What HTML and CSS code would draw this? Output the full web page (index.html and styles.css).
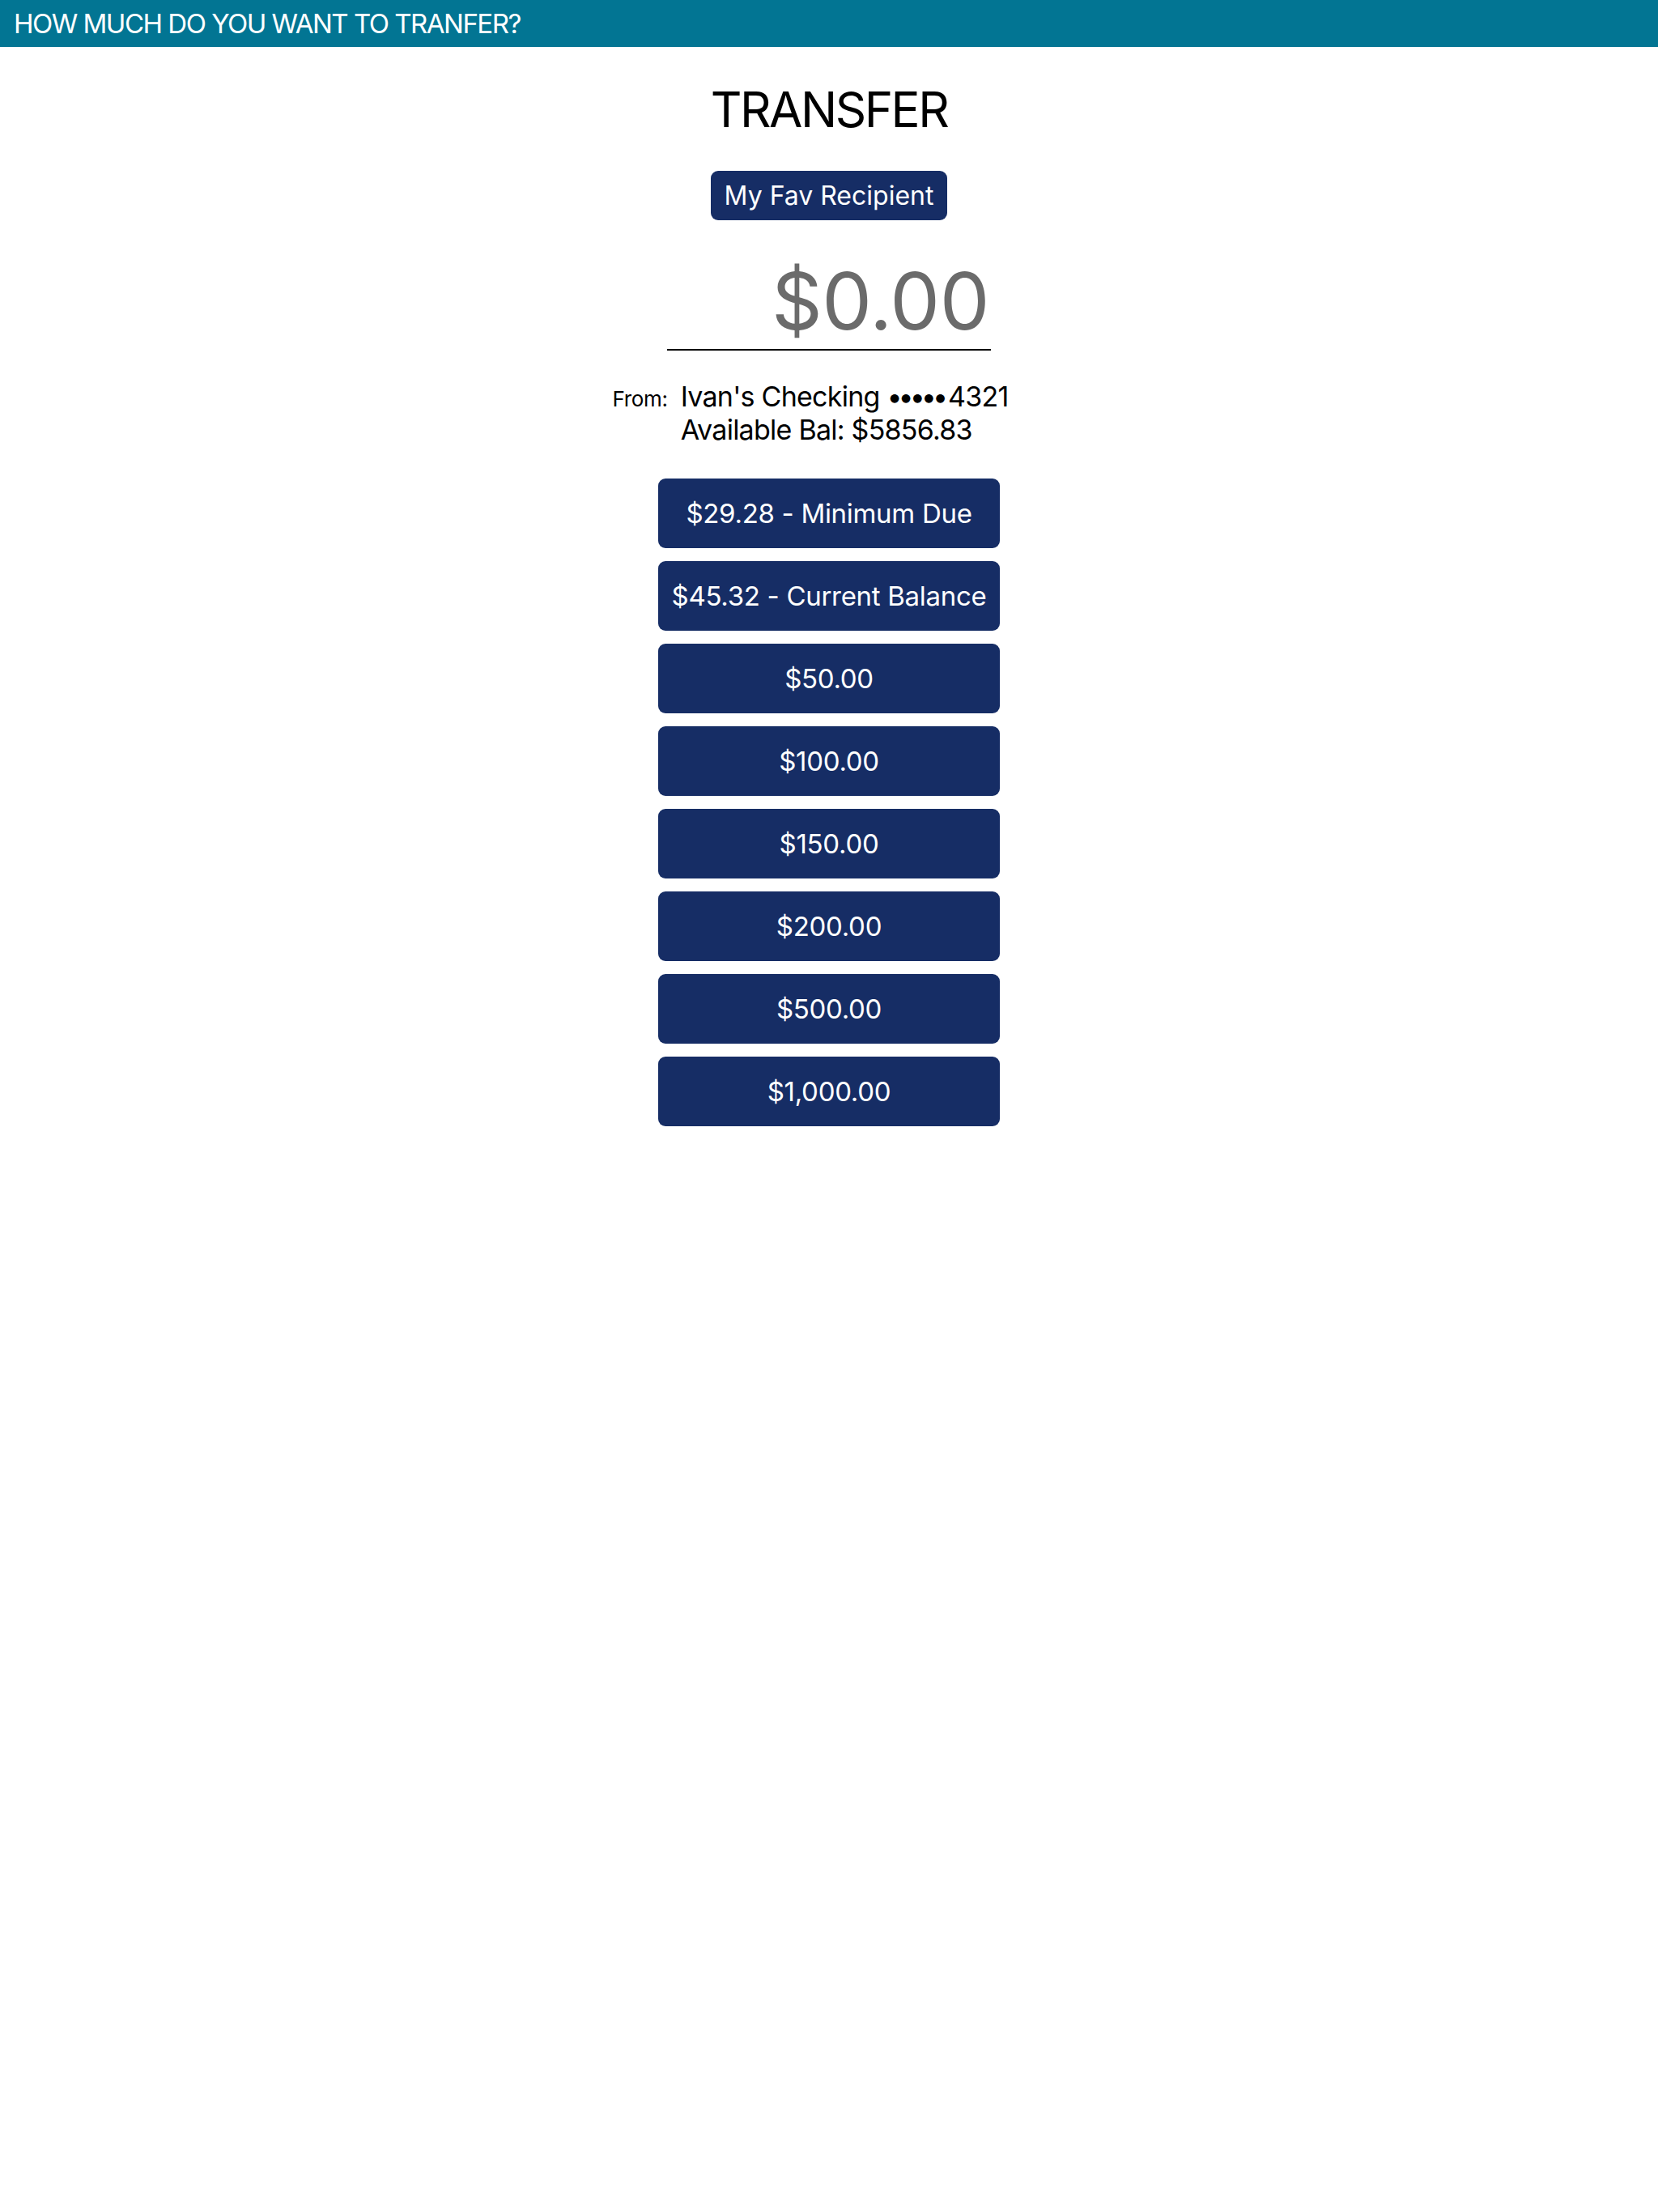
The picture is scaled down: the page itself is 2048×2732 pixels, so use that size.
FILE: index.html
```html
<!DOCTYPE html>
<html lang="en">
<head>
<meta charset="utf-8">
<title>Transfer</title>
<link rel="stylesheet" href="styles.css">
</head>
<body>
<header class="topbar">HOW MUCH DO YOU WANT TO TRANFER?</header>
<main class="content">
  <h1 class="title">TRANSFER</h1>
  <button class="recipient">My Fav Recipient</button>
  <div class="amount-field"><span class="amount">$0.00</span></div>
  <div class="from-row">
    <span class="from-label">From:</span>
    <div class="from-details">
      <div>Ivan's Checking <span class="dots">•••••</span>4321</div>
      <div>Available Bal: $5856.83</div>
    </div>
  </div>
  <div class="options">
    <button class="option">$29.28 - Minimum Due</button>
    <button class="option">$45.32 - Current Balance</button>
    <button class="option">$50.00</button>
    <button class="option">$100.00</button>
    <button class="option">$150.00</button>
    <button class="option">$200.00</button>
    <button class="option">$500.00</button>
    <button class="option">$1,000.00</button>
  </div>
</main>
</body>
</html>
```
FILE: styles.css
```css
* { box-sizing: border-box; }
html, body {
  margin: 0;
  padding: 0;
  background: #ffffff;
  font-family: Inter, "Noto Sans", sans-serif;
  color: #000;
}
.topbar {
  height: 58px;
  line-height: 58px;
  background: #027593;
  color: #ffffff;
  font-size: 33px;
  letter-spacing: -1.5px;
  padding-left: 17px;
  white-space: nowrap;
}
.content {
  display: flex;
  flex-direction: column;
  align-items: center;
}
.title {
  margin: 41px 0 0;
  font-size: 60px;
  line-height: 72px;
  font-weight: 400;
  letter-spacing: -2.5px;
}
.recipient {
  margin-top: 40px;
  height: 61px;
  padding: 0 17px;
  border: none;
  border-radius: 9px;
  background: #162d65;
  color: #ffffff;
  font-family: inherit;
  font-size: 32px;
  line-height: 39px;
}
.amount-field {
  margin-top: 41px;
  width: 400px;
  text-align: right;
  padding-right: 2px;
  border-bottom: 2px solid #000;
}
.amount {
  display: block;
  font-size: 98px;
  line-height: 118px;
  color: #6b6b6b;
  letter-spacing: -0.5px;
}
.from-row {
  margin-top: 36px;
  display: flex;
  align-items: baseline;
  gap: 16px;
  margin-right: 46px;
}
.from-label {
  font-size: 26px;
  letter-spacing: -0.3px;
}
.from-details {
  font-size: 34px;
  line-height: 41px;
  letter-spacing: -0.75px;
}
.dots {
  letter-spacing: -5px;
  margin-right: 5px;
}
.options {
  margin-top: 40px;
  display: flex;
  flex-direction: column;
  gap: 16px;
}
.option {
  width: 422px;
  height: 86px;
  border: none;
  border-radius: 9px;
  background: #162d65;
  color: #ffffff;
  font-family: inherit;
  font-size: 33px;
  letter-spacing: -0.3px;
}
```
